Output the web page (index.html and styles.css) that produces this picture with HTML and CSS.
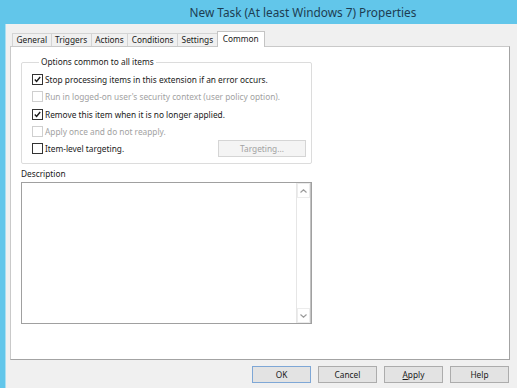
FILE: index.html
```html
<!DOCTYPE html>
<html lang="en">
<head>
    <meta charset="UTF-8">
    <title>New Task (At least Windows 7) Properties</title>
    <link rel="stylesheet" href="styles.css">
</head>
<body>

<div class="window">
    <!-- Caption -->
    <div class="titlebar">New Task (At least Windows 7) Properties</div>

    <div class="frame">
        <div class="edge"></div>

        <div class="dialog">
            <!-- Tab strip -->
            <div class="tabs">
                <div class="tab">General</div>
                <div class="tab">Triggers</div>
                <div class="tab">Actions</div>
                <div class="tab">Conditions</div>
                <div class="tab">Settings</div>
                <div class="tab active">Common</div>
            </div>

            <!-- Common page -->
            <div class="panel">
                <fieldset class="group">
                    <legend>Options common to all items</legend>

                    <div class="option">
                        <span class="check"><svg viewBox="0 0 11 11"><path d="M2.2 5.6 L4.4 8 L8.8 2.4"/></svg></span>
                        <span>Stop processing items in this extension if an error occurs.</span>
                    </div>
                    <div class="option disabled">
                        <span class="check"></span>
                        <span>Run in logged-on user's security context (user policy option).</span>
                    </div>
                    <div class="option">
                        <span class="check"><svg viewBox="0 0 11 11"><path d="M2.2 5.6 L4.4 8 L8.8 2.4"/></svg></span>
                        <span>Remove this item when it is no longer applied.</span>
                    </div>
                    <div class="option disabled">
                        <span class="check"></span>
                        <span>Apply once and do not reapply.</span>
                    </div>
                    <div class="option">
                        <span class="check"></span>
                        <span>Item-level targeting.</span>
                        <button class="targeting" disabled>Targeting...</button>
                    </div>
                </fieldset>

                <div class="desc-label">Description</div>
                <div class="desc">
                    <div class="desc-text"></div>
                    <div class="scrollbar">
                        <div class="arrow"><svg viewBox="0 0 7 4"><path d="M0.5 3.5 L3.5 0.8 L6.5 3.5"/></svg></div>
                        <div class="track"></div>
                        <div class="arrow"><svg viewBox="0 0 7 4"><path d="M0.5 0.5 L3.5 3.2 L6.5 0.5"/></svg></div>
                    </div>
                </div>
            </div>

            <!-- Dialog buttons -->
            <div class="buttons">
                <button class="btn default">OK</button>
                <button class="btn">Cancel</button>
                <button class="btn"><u>A</u>pply</button>
                <button class="btn">Help</button>
            </div>
        </div>
    </div>
</div>

</body>
</html>
```
FILE: styles.css
```css
/* Basic reset */
* {
    box-sizing: border-box;
    margin: 0;
    padding: 0;
}

body {
    width: 517px;
    height: 388px;
    overflow: hidden;
    font-family: 'Noto Sans', sans-serif;
    font-size: 8.3px;
    color: #1a1a1a;
    background: #f0f0f0;
}

:root {
    --frame-blue: #62c6ea;
    --dialog-grey: #f0f0f0;
    --border-grey: #c9c9c9;
    --disabled-text: #a2a2a2;
}

.window {
    display: flex;
    flex-direction: column;
    height: 388px;
}

/* Caption bar */
.titlebar {
    height: 24px;
    line-height: 24px;
    padding-left: 89px;
    text-align: center;
    font-size: 11.8px;
    color: #1d3d52;
    background: var(--frame-blue);
}

.frame {
    flex: 1;
    display: flex;
}

.edge {
    width: 6px;
    background: var(--frame-blue);
    border-right: 1px solid #a9dff2;
}

.dialog {
    flex: 1;
    padding: 7px 7px 0 4px;
    background: var(--dialog-grey);
}

/* Tabs */
.tabs {
    display: flex;
    align-items: flex-end;
    height: 15px;
    padding-left: 2px;
}

.tab {
    height: 13px;
    line-height: 12px;
    padding: 0 3.5px;
    border: 1px solid #d4d4d4;
    border-bottom: none;
    margin-right: -1px;
    background: #f0f0f0;
}

.tab.active {
    position: relative;
    z-index: 1;
    height: 16px;
    margin-bottom: -1px;
    padding: 0 5px;
    line-height: 13px;
    background: #fff;
    border-color: #c4c4c4;
}

.panel {
    height: 314px;
    padding: 9px 0 0 10px;
    background: #fff;
    border: 1px solid var(--border-grey);
    border-right-color: #a3a3a3;
    border-bottom-color: #a3a3a3;
}

/* Group box */
.group {
    width: 291px;
    padding: 3px 5px 6px 10px;
    border: 1px solid #dcdcdc;
    border-radius: 2px;
}

.group legend {
    padding: 0 2px;
    margin-left: 7px;
    line-height: 12px;
}

.option {
    display: flex;
    align-items: center;
    gap: 2px;
    height: 17.3px;
}

.option.disabled {
    color: var(--disabled-text);
}

.check {
    width: 11px;
    height: 11px;
    border: 1px solid #333;
    background: #fff;
    flex-shrink: 0;
}

.option.disabled .check {
    border-color: #cfcfcf;
}

.check svg {
    display: block;
    width: 9px;
    height: 9px;
}

.check path {
    fill: none;
    stroke: #1a1a1a;
    stroke-width: 1.7;
}

.targeting {
    margin-left: auto;
    width: 88px;
    height: 17px;
    font-family: inherit;
    font-size: 8.3px;
    color: var(--disabled-text);
    background: #f4f4f4;
    border: 1px solid #d5d5d5;
}

/* Description box */
.desc-label {
    margin-top: 4px;
    line-height: 12px;
}

.desc {
    display: flex;
    width: 291px;
    height: 142px;
    margin-top: 2px;
    border: 1px solid #a0a0a0;
}

.desc-text {
    flex: 1;
}

.scrollbar {
    width: 15px;
    display: flex;
    flex-direction: column;
    border-left: 1px solid #e6e6e6;
    border-right: 1px solid #c2c2c2;
}

.scrollbar .arrow {
    height: 15px;
    display: flex;
    align-items: center;
    justify-content: center;
    border: 1px solid #ececec;
}

.scrollbar .track {
    flex: 1;
}

.arrow svg {
    width: 7px;
    height: 4px;
}

.arrow path {
    fill: none;
    stroke: #9b9b9b;
    stroke-width: 1.2;
}

/* Dialog buttons */
.buttons {
    display: flex;
    gap: 7px;
    padding-left: 242px;
    margin-top: 6px;
}

.btn {
    width: 59px;
    height: 17px;
    font-family: inherit;
    font-size: 8.3px;
    color: #1a1a1a;
    background: #e3e3e3;
    border: 1px solid #acacac;
}

.btn.default {
    border-color: #7ea7d6;
}
```
